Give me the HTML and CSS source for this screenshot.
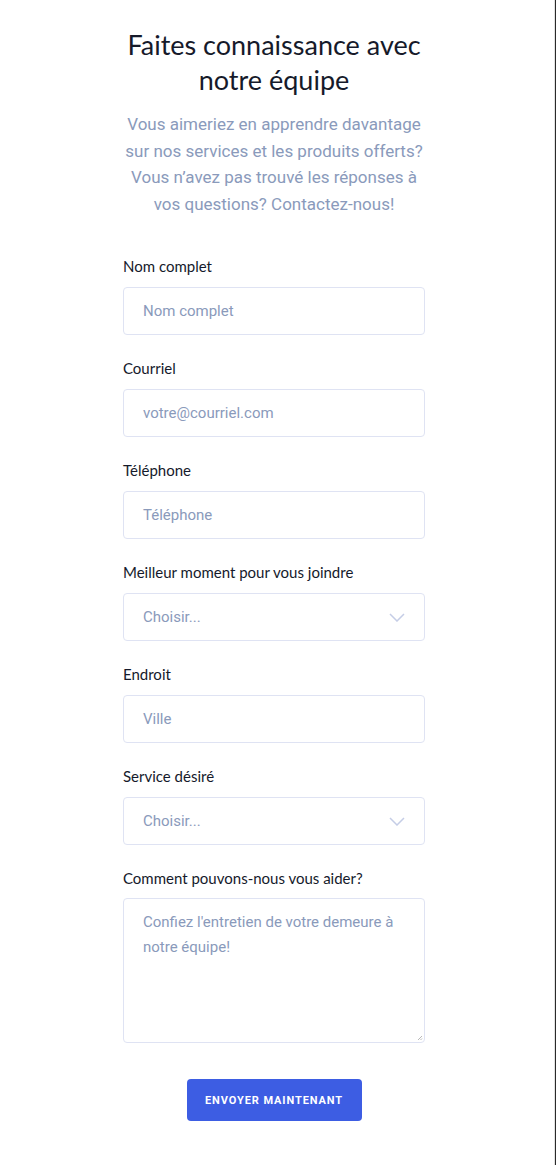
FILE: index.html
```html
<!DOCTYPE html>
<html lang="fr">
<head>
<meta charset="utf-8">
<title>Faites connaissance avec notre équipe</title>
<link rel="stylesheet" href="styles.css">
</head>
<body>
<div class="page">
  <div class="col">
    <h1 class="title">Faites connaissance avec notre équipe</h1>
    <p class="lead">Vous aimeriez en apprendre davantage sur nos services et les produits offerts? Vous n’avez pas trouvé les réponses à vos questions? Contactez-nous!</p>
    <form class="form">
      <div class="field">
        <label class="label">Nom complet</label>
        <div class="control"><span class="ph">Nom complet</span></div>
      </div>
      <div class="field">
        <label class="label">Courriel</label>
        <div class="control"><span class="ph">votre@courriel.com</span></div>
      </div>
      <div class="field">
        <label class="label">Téléphone</label>
        <div class="control"><span class="ph">Téléphone</span></div>
      </div>
      <div class="field">
        <label class="label">Meilleur moment pour vous joindre</label>
        <div class="control select"><span class="ph">Choisir...</span>
          <svg class="chev" width="16" height="9" viewBox="0 0 16 9"><path d="M1 1l7 7 7-7" fill="none" stroke="#c5cde6" stroke-width="1.5"/></svg>
        </div>
      </div>
      <div class="field">
        <label class="label">Endroit</label>
        <div class="control"><span class="ph">Ville</span></div>
      </div>
      <div class="field">
        <label class="label">Service désiré</label>
        <div class="control select"><span class="ph">Choisir...</span>
          <svg class="chev" width="16" height="9" viewBox="0 0 16 9"><path d="M1 1l7 7 7-7" fill="none" stroke="#c5cde6" stroke-width="1.5"/></svg>
        </div>
      </div>
      <div class="field last">
        <label class="label">Comment pouvons-nous vous aider?</label>
        <div class="control area"><span class="ph">Confiez l'entretien de votre demeure à notre équipe!</span>
          <svg class="grip" width="6" height="6" viewBox="0 0 6 6"><path d="M5 1L1 5M5 3.5L3.5 5" stroke="#b8b8b8" stroke-width="1"/></svg>
        </div>
      </div>
      <div class="actions">
        <button type="button" class="btn">ENVOYER MAINTENANT</button>
      </div>
    </form>
  </div>
</div>
<div class="edge"></div>
</body>
</html>
```
FILE: styles.css
```css
html, body {
  margin: 0;
  padding: 0;
  background: #ffffff;
}
body {
  display: flex;
  min-height: 1165px;
  font-family: Lato, "Open Sans", sans-serif;
}
.page {
  flex: 1;
  padding-right: 6px;
}
.edge {
  width: 1px;
  border-left: 1px solid #e2e2e2;
  background: #2a2a2a;
}
.col {
  width: 302px;
  margin: 0 auto;
  padding-top: 27px;
}
.title {
  margin: 0 -4px;
  text-align: center;
  font-family: Lato, sans-serif;
  font-weight: 400;
  font-size: 27px;
  line-height: 35px;
  color: #161a2a;
}
.lead {
  margin: 14px -4px 0;
  text-align: center;
  font-family: Roboto, "Liberation Sans", sans-serif;
  font-size: 17px;
  line-height: 26.5px;
  color: #8a9abb;
}
.form {
  margin-top: 39px;
  display: flex;
  flex-direction: column;
}
.field {
  display: flex;
  flex-direction: column;
  margin-bottom: 23px;
}
.field.last {
  margin-bottom: 36px;
}
.label {
  font-family: Lato, sans-serif;
  font-size: 15px;
  line-height: 20px;
  color: #151a2b;
  margin-bottom: 11px;
}
.field.last .label {
  margin-bottom: 10px;
}
.control {
  height: 48px;
  box-sizing: border-box;
  border: 1px solid #dfe3f3;
  border-radius: 4px;
  display: flex;
  align-items: center;
  padding: 0 19px;
  justify-content: space-between;
}
.ph {
  font-family: Roboto, "Liberation Sans", sans-serif;
  font-size: 15px;
  color: #8a9abb;
}
.select {
  padding-right: 19px;
}
.chev {
  display: block;
  margin-top: 1px;
}
.area {
  height: 145px;
  align-items: flex-start;
  padding-top: 11px;
  position: relative;
}
.area .ph {
  line-height: 25px;
  padding-right: 10px;
}
.grip {
  position: absolute;
  right: 1px;
  bottom: 1px;
}
.actions {
  display: flex;
  justify-content: center;
}
.btn {
  width: 175px;
  height: 42px;
  border: none;
  border-radius: 4px;
  background: #3d5de3;
  color: #ffffff;
  font-family: Roboto, "Liberation Sans", sans-serif;
  font-weight: 700;
  font-size: 11px;
  letter-spacing: 0.9px;
  padding: 0;
}
```
